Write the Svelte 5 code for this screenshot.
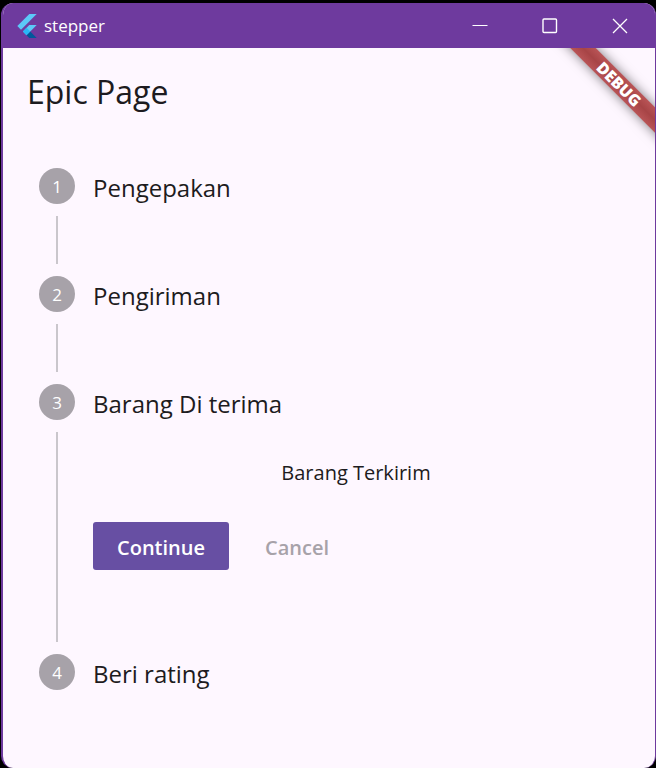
<script>
  const steps = [
    { title: 'Pengepakan' },
    { title: 'Pengiriman' },
    { title: 'Barang Di terima', content: 'Barang Terkirim' },
    { title: 'Beri rating' }
  ];
</script>

<div class="window">
  <header class="titlebar">
    <svg class="logo" viewBox="0 0 24 24" width="24" height="24" aria-hidden="true">
      <path fill="#5cc8f8" d="M14.3 0 2.3 12 6 15.7 21.7 0z" />
      <path fill="#5cc8f8" d="M14.3 11.07 7.86 17.53l3.7 3.7L21.7 11.07z" />
      <path fill="#01579b" d="m11.56 21.23 2.77 2.77h7.37l-6.46-6.47z" />
      <path fill="#29b6f6" d="m7.86 17.53 3.69-3.69 3.69 3.69-3.69 3.7z" />
    </svg>
    <span class="name">stepper</span>
    <div class="controls">
      <button aria-label="Minimize">
        <svg viewBox="0 0 16 16" width="16" height="16"><path d="M.5 7.5h15" /></svg>
      </button>
      <button aria-label="Maximize">
        <svg viewBox="0 0 16 16" width="16" height="16"><rect x="1" y="1" width="13.5" height="13.5" rx="1" stroke-width="1.4" /></svg>
      </button>
      <button aria-label="Close">
        <svg viewBox="0 0 16 16" width="16" height="16"><path d="m1 1 14 14M15 1 1 15" stroke-width="1.3" /></svg>
      </button>
    </div>
  </header>

  <main>
    <div class="banner">DEBUG</div>
    <h1>Epic Page</h1>
    <ol>
      {#each steps as step, i}
        <li>
          <div class="rail">
            <span class="circle">{i + 1}</span>
            {#if i < steps.length - 1}<span class="line"></span>{/if}
          </div>
          <div class="body">
            <h2>{step.title}</h2>
            {#if step.content}
              <p>{step.content}</p>
              <div class="actions">
                <button class="primary">Continue</button>
                <button class="text">Cancel</button>
              </div>
            {/if}
          </div>
        </li>
      {/each}
    </ol>
  </main>
</div>

<style>
  :global(body) {
    background: #000;
  }

  .window {
    box-sizing: border-box;
    display: flex;
    flex-direction: column;
    min-height: calc(100vh - 3px);
    margin: 3px 0 0 1px;
    border: solid #6e3a9e;
    border-width: 0 1px 0 2px;
    border-radius: 12px;
    overflow: hidden;
    background: #fef7ff;
    color: #1d1b20;
    font-family: 'Open Sans', 'Noto Sans', sans-serif;
  }

  button {
    border: 0;
    background: none;
    font-family: inherit;
  }

  .titlebar {
    display: flex;
    align-items: center;
    height: 45px;
    padding-left: 12px;
    background: #6e3a9e;
    color: #fff;
  }

  .name {
    margin-left: 5px;
    font-size: 17px;
    line-height: 24px;
  }

  .controls {
    display: flex;
    align-self: stretch;
    margin-left: auto;
  }

  .controls button {
    display: flex;
    align-items: center;
    justify-content: center;
    width: 70px;
    padding: 0;
  }

  .controls svg {
    fill: none;
    stroke: #fff;
  }

  main {
    position: relative;
    flex: 1;
    overflow: hidden;
    padding: 0 36px 36px;
  }

  .banner {
    position: absolute;
    top: 27px;
    right: -44px;
    width: 160px;
    transform: rotate(45deg);
    background: linear-gradient(#b95456, #a74446 50%, #b95456);
    box-shadow: 0 0 12px rgba(0, 0, 0, 0.5);
    color: #fff;
    font-size: 16px;
    font-weight: 800;
    line-height: 18px;
    text-align: center;
  }

  h1 {
    margin: 0 0 32px -12px;
    font-size: 32px;
    font-weight: 400;
    line-height: 88px;
  }

  ol {
    margin: 0;
    padding: 0;
    list-style: none;
  }

  li {
    display: flex;
    gap: 18px;
  }

  .rail {
    display: flex;
    flex-direction: column;
    align-items: center;
    width: 36px;
  }

  .circle {
    width: 36px;
    height: 36px;
    border-radius: 50%;
    background: #a7a2a9;
    color: #fff;
    font-size: 17px;
    line-height: 38px;
    text-align: center;
  }

  .line {
    flex: 1;
    width: 2px;
    min-height: 48px;
    margin: 12px 0;
    background: #cac6cc;
  }

  .body {
    flex: 1;
  }

  h2 {
    margin: 0;
    font-size: 24px;
    font-weight: 400;
    line-height: 40px;
  }

  p {
    margin: 32px 0;
    font-size: 20px;
    line-height: 34px;
    text-align: center;
  }

  .actions {
    display: flex;
    gap: 12px;
    margin-bottom: 84px;
  }

  .actions button {
    height: 48px;
    padding: 2px 24px 0;
    border-radius: 3px;
    font-size: 20px;
    font-weight: 600;
  }

  .primary {
    background: #674fa3;
    color: #fff;
  }

  .text {
    color: #a7a2a9;
  }
</style>
